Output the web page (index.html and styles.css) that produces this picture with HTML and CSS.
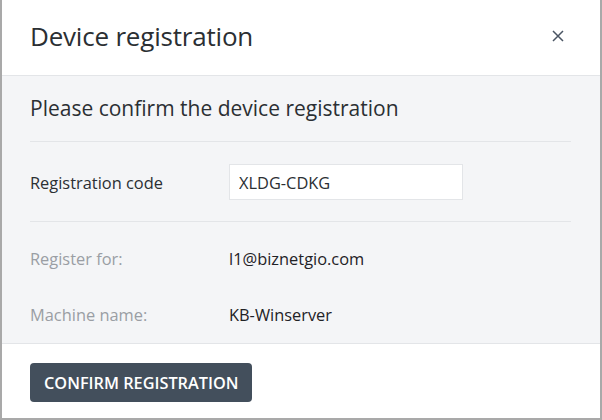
FILE: index.html
```html
<!DOCTYPE html>
<html lang="en">
<head>
    <meta charset="UTF-8">
    <meta name="viewport" content="width=device-width, initial-scale=1.0">
    <title>Device registration</title>
    <link rel="stylesheet" href="styles.css">
</head>
<body>
    <div class="modal">
        <div class="modal-header">
            <h2>Device registration</h2>
            <button type="button" class="close" aria-label="Close">
                <svg width="12" height="12" viewBox="0 0 12 12">
                    <path d="M1 1L11 11M11 1L1 11" stroke="#4a5563" stroke-width="1.5" fill="none"/>
                </svg>
            </button>
        </div>
        <div class="modal-body">
            <h3>Please confirm the device registration</h3>
            <div class="form-row">
                <label for="code">Registration code</label>
                <input type="text" id="code" value="XLDG-CDKG">
            </div>
            <div class="info">
                <div class="info-row">
                    <span class="info-label">Register for:</span>
                    <span class="info-value">l1@biznetgio.com</span>
                </div>
                <div class="info-row">
                    <span class="info-label">Machine name:</span>
                    <span class="info-value">KB-Winserver</span>
                </div>
            </div>
        </div>
        <div class="modal-footer">
            <button type="button" class="btn-confirm">CONFIRM REGISTRATION</button>
        </div>
    </div>
</body>
</html>
```

FILE: styles.css
```css
body {
    margin: 0;
    padding: 0 2px 2px 2px;
    background: #a9a9a9;
    font-family: "Open Sans", Arial, sans-serif;
    color: #2b2f33;
}
.modal {
    background: white;
    height: 418px;
    display: flex;
    flex-direction: column;
}
.modal-header {
    height: 76px;
    padding: 0 28px 4px;
    display: flex;
    align-items: center;
    justify-content: space-between;
    border-bottom: 1px solid #e3e5e8;
    box-sizing: border-box;
}
.modal-header h2 {
    margin: 0;
    font-size: 26px;
    font-weight: normal;
    color: #2b2f33;
    line-height: 36px;
    letter-spacing: -0.2px;
}
.close {
    background: none;
    border: none;
    padding: 0;
    margin-right: 8px;
    display: flex;
    cursor: pointer;
}
.modal-body {
    background: #f4f5f7;
    padding: 0 29px 0 28px;
    height: 268px;
    box-sizing: border-box;
    border-bottom: 1px solid #e3e5e8;
}
.modal-body h3 {
    margin: 0;
    padding: 18px 0 18px;
    font-size: 21px;
    font-weight: normal;
    line-height: 29px;
    border-bottom: 1px solid #e3e5e8;
}
.form-row {
    display: flex;
    align-items: center;
    padding: 22px 0 21px;
    border-bottom: 1px solid #e3e5e8;
}
.form-row label {
    width: 199px;
    font-size: 16.4px;
}
.form-row input {
    width: 234px;
    height: 36px;
    box-sizing: border-box;
    border: 1px solid #e3e5e8;
    background: white;
    padding: 0 9px;
    font-family: "Open Sans", Arial, sans-serif;
    font-size: 16.4px;
    color: #2b2f33;
    outline: none;
}
.info {
    padding-top: 8px;
}
.info-row {
    display: flex;
    align-items: center;
    height: 56px;
    font-size: 16.4px;
}
.info-label {
    width: 199px;
    color: #9a9ea4;
}
.info-value {
    color: #1f2226;
}
.modal-footer {
    padding: 19px 28px 0;
}
.btn-confirm {
    background: #434f5c;
    color: white;
    border: none;
    border-radius: 4px;
    height: 39px;
    padding: 0 14px;
    font-family: "Open Sans", Arial, sans-serif;
    font-size: 16.3px;
    font-weight: 600;
    cursor: pointer;
}
```
